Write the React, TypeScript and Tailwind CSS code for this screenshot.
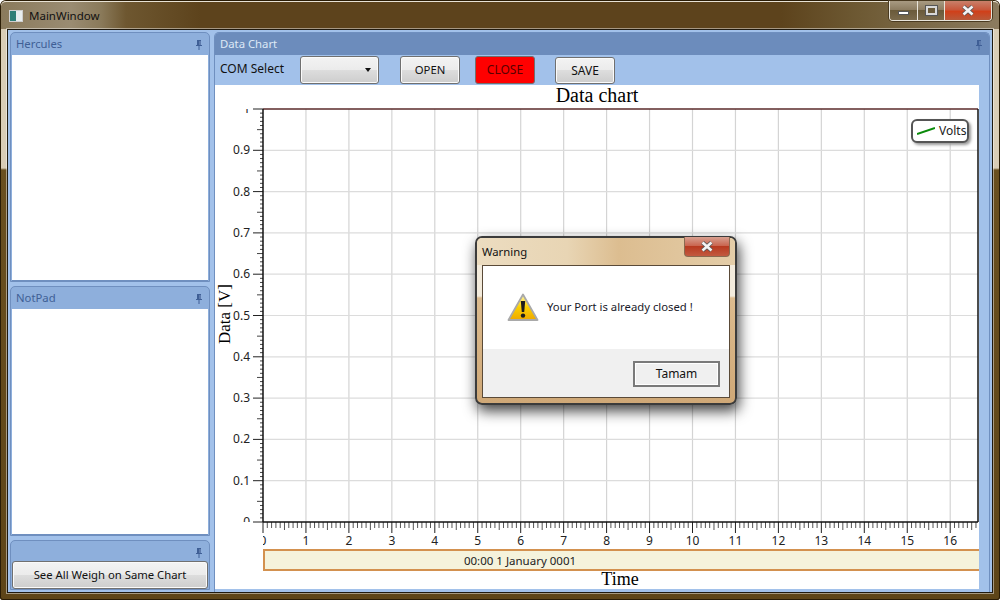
import React from 'react';

const ui = { fontFamily: '"Noto Sans", "Open Sans", sans-serif' };
const serif = '"Liberation Serif", serif';
const sans = '"Noto Sans", "Open Sans", sans-serif';

const btn =
  'flex items-center justify-center rounded-[3px] border border-[#707070] bg-[linear-gradient(#f3f3f3_0%,#ebebeb_50%,#dddddd_50%,#cdcdcd_100%)] text-[#111] shadow-[inset_0_0_0_1px_#fafafa]';

const capGlass = 'bg-[linear-gradient(#a89a82_0%,#8a7a5e_50%,#6a5a3a_50%,#7a6a4c_100%)]';

function Pin() {
  return (
    <svg width="8" height="10" viewBox="0 0 8 10" className="shrink-0">
      <path d="M2 0h4v5h1v1H4.5v4h-1V6H1V5h1z" fill="#3f5f96" />
      <path d="M4.5 1h1v4h-1z" fill="#7f9ac6" />
    </svg>
  );
}

function DockPanel({ title, className, children }: { title: string; className: string; children?: React.ReactNode }) {
  return (
    <div className={`flex flex-col rounded-t-[5px] border border-[#6f8fbf] bg-[#8eafdc] ${className}`}>
      <div className="flex h-[22px] shrink-0 items-center justify-between pl-[5px] pr-[6px] pt-[1px] text-[11.3px] text-[#3f5f96]">
        <span>{title}</span>
        <Pin />
      </div>
      {children}
    </div>
  );
}

function Chart() {
  const xs = Array.from({ length: 17 }, (_, i) => 48 + i * 42.95);
  const ys = Array.from({ length: 11 }, (_, i) => 24 + i * 41.3);
  const xMinor = Array.from({ length: 167 }, (_, i) => 48 + i * 4.295);
  const yMinor = Array.from({ length: 101 }, (_, i) => 24 + i * 4.13);
  return (
    <svg width="764" height="504" viewBox="0 0 764 504" className="block">
      <defs>
        <clipPath id="ylab">
          <rect x="0" y="24" width="47" height="413" />
        </clipPath>
        <clipPath id="xlab">
          <rect x="48" y="440" width="716" height="24" />
        </clipPath>
      </defs>
      <text x="382" y="17" textAnchor="middle" fontFamily={serif} fontSize="20" fill="#000">
        Data chart
      </text>
      {xs.slice(1).map((x) => (
        <line key={x} x1={x} x2={x} y1="24" y2="437" stroke="#d4d4d4" strokeWidth="1.2" />
      ))}
      {ys.slice(1, 10).map((y) => (
        <line key={y} x1="48" x2="763" y1={y} y2={y} stroke="#dcdcdc" strokeWidth="1.2" />
      ))}
      {yMinor.map((y, i) => (
        <line key={y} x1={i % 10 === 0 ? 38 : i % 5 === 0 ? 42 : 45} x2="48" y1={y} y2={y} stroke={i % 10 === 0 ? '#222' : '#444'} strokeWidth="1" />
      ))}
      {xMinor.map((x, i) => (
        <line key={x} x1={x} x2={x} y1="437" y2={i % 10 === 0 ? 448 : i % 5 === 0 ? 445 : 443} stroke={i % 10 === 0 ? '#222' : '#555'} strokeWidth="1" />
      ))}
      <line x1="48" x2="763" y1="24" y2="24" stroke="#5a2a2a" strokeWidth="1.5" />
      <line x1="48" x2="48" y1="24" y2="437" stroke="#111" strokeWidth="1.5" />
      <line x1="763" x2="763" y1="24" y2="437" stroke="#111" strokeWidth="1.5" />
      <line x1="48" x2="763" y1="437" y2="437" stroke="#111" strokeWidth="1.5" />
      <g clipPath="url(#ylab)" fontFamily={sans} fontSize="12" fill="#222">
        {ys.map((y, i) => (
          <text key={y} x="35" y={y + 4} textAnchor="end">
            {i === 0 ? '1' : i === 10 ? '0' : (1 - i / 10).toFixed(1)}
          </text>
        ))}
      </g>
      <g clipPath="url(#xlab)" fontFamily={sans} fontSize="12" fill="#222">
        {xs.map((x, i) => (
          <text key={x} x={x} y="460" textAnchor="middle">
            {i}
          </text>
        ))}
      </g>
      <rect x="49" y="465" width="716" height="20" fill="#f5f3dc" stroke="#d3914f" strokeWidth="2" />
      <text x="305" y="480" textAnchor="middle" fontFamily={sans} fontSize="11.5" fill="#222">
        00:00 1 January 0001
      </text>
      <text x="405" y="500" textAnchor="middle" fontFamily={serif} fontSize="18" fill="#000">
        Time
      </text>
      <text transform="translate(15 229) rotate(-90)" x="0" y="0" textAnchor="middle" fontFamily={serif} fontSize="17" fill="#000">
        Data [V]
      </text>
    </svg>
  );
}

function Warning() {
  return (
    <svg width="32" height="29" viewBox="0 0 32 29" className="shrink-0">
      <defs>
        <linearGradient id="warn" x1="0" y1="0" x2="0" y2="1">
          <stop offset="0" stopColor="#fff6b0" />
          <stop offset="0.5" stopColor="#fbd000" />
          <stop offset="1" stopColor="#eea800" />
        </linearGradient>
      </defs>
      <path d="M16 1.5 L30.5 27 H1.5 Z" fill="url(#warn)" stroke="#a9a9a9" strokeWidth="1.8" strokeLinejoin="round" />
      <path d="M13.8 8h4.4l-1 11h-2.4z" fill="#1c1c1c" />
      <circle cx="16" cy="22.6" r="2.2" fill="#1c1c1c" />
    </svg>
  );
}

function CloseGlyph() {
  return (
    <svg width="14" height="11" viewBox="0 0 14 11">
      <path d="M2.5 1.5 L11.5 9.5 M11.5 1.5 L2.5 9.5" stroke="#555" strokeWidth="4.2" />
      <path d="M2.5 1.5 L11.5 9.5 M11.5 1.5 L2.5 9.5" stroke="#f4f4f4" strokeWidth="2.6" />
    </svg>
  );
}

export default function App() {
  return (
    <div
      className="relative flex h-[600px] w-[1000px] flex-col overflow-hidden rounded-t-[6px] rounded-b-[3px] bg-[linear-gradient(#d8ccb6_0px,#d8ccb6_168px,#6a5020_170px,#5e4518_100%)] text-[12px] shadow-[inset_0_0_0_1px_#2a1c05]"
      style={ui}
    >
      {/* title bar */}
      <div className="mx-[1px] mt-[1px] flex h-[28px] shrink-0 items-start rounded-t-[5px] border-t border-[#e8e2d4] bg-[linear-gradient(90deg,#8a7a5c_0px,#9a8c72_70px,#8a7a5a_100px,#6e5730_125px,#5d431c_200px,#5d431c_780px,#6e5a34_860px,#8c7c60_1000px)]">
        <div className="ml-[8px] mt-[8px] h-[12px] w-[14px] border border-[#cfcfcf] bg-[linear-gradient(90deg,#2f7f78_0%,#2f7f78_50%,#e8eef0_50%)]" />
        <span className="ml-[6px] mt-[5px] text-[11.5px] text-[#111]">MainWindow</span>
        <div className="ml-auto mr-[7px] flex h-[20px] -mt-[1px] overflow-hidden rounded-b-[4px] border border-t-0 border-[#e8e4da] shadow-[0_0_0_1px_#4a3a20]">
          <div className={`flex w-[28px] items-center justify-center border-r border-[#e8e4da] ${capGlass}`}>
            <div className="mt-[4px] h-[4px] w-[11px] border border-[#555] bg-white" />
          </div>
          <div className={`flex w-[27px] items-center justify-center border-r border-[#e8e4da] ${capGlass}`}>
            <div className="h-[9px] w-[11px] border-2 border-[#d8d8d8] bg-[#6a5a3a] outline outline-[#555]" />
          </div>
          <div className="flex w-[46px] items-center justify-center bg-[linear-gradient(#c9806a_0%,#c8583c_45%,#d0401a_55%,#b85a3a_100%)]">
            <CloseGlyph />
          </div>
        </div>
      </div>

      {/* client area */}
      <div className="mx-[7px] flex h-[564px] gap-[4px] border border-[#1f1a10] bg-[#a2c1ea] px-[2px] pt-[2px] shadow-[0_0_0_1px_rgba(255,255,255,0.45)]">
        <div className="flex w-[200px] shrink-0 flex-col gap-[4px]">
          <DockPanel title="Hercules" className="h-[250px]">
            <div className="mx-[1px] flex-1 border-b border-[#6f8fbf] bg-white" />
          </DockPanel>
          <DockPanel title="NotPad" className="h-[250px]">
            <div className="mx-[1px] flex-1 border-b border-[#6f8fbf] bg-white" />
          </DockPanel>
          <DockPanel title="" className="h-[50px]">
            <button className={`${btn} mx-[1px] -mt-[2px] h-[28px] text-[11.3px]`}>See All Weigh on Same Chart</button>
          </DockPanel>
        </div>

        <div className="flex min-w-0 flex-1 flex-col rounded-t-[5px] border-l border-t border-r border-[#6f8fbf]">
          <div className="flex h-[22px] shrink-0 items-center justify-between rounded-t-[4px] bg-[#6c8cbc] pl-[5px] pr-[6px] pt-[1px] text-[11.3px] text-[#dde8f6]">
            <span>Data Chart</span>
            <Pin />
          </div>
          <div className="flex h-[30px] shrink-0 items-center pl-[5px] text-[#111]">
            <span className="w-[80px] -translate-y-[1px]">COM Select</span>
            <div className={`${btn} h-[28px] w-[79px] justify-end pr-[7px]`}>
              <span className="h-0 w-0 border-x-[3.5px] border-t-[4px] border-x-transparent border-t-[#111]" />
            </div>
            <button className={`${btn} ml-[21px] h-[28px] w-[60px] text-[11.3px]`}>OPEN</button>
            <button className="ml-[15px] flex h-[28px] w-[60px] items-center justify-center rounded-[3px] border border-[#707070] bg-[#ff0000] text-[12px] text-[#5a0000]">
              CLOSE
            </button>
            <button className={`${btn} ml-[20px] mt-[1px] h-[27px] w-[60px] text-[12px]`}>SAVE</button>
          </div>
          <div className="relative mr-[10px] h-[504px] bg-white">
            <Chart />
            {/* legend */}
            <div className="absolute left-[696px] top-[34px] flex h-[24px] w-[58px] items-center gap-[4px] rounded-[6px] border-2 border-[#555] bg-white pl-[4px] text-[12px] text-[#222] shadow-[2px_2px_3px_#999]">
              <svg width="18" height="8" viewBox="0 0 18 8">
                <line x1="0" y1="7" x2="18" y2="1" stroke="#0a8a0a" strokeWidth="2" />
              </svg>
              <span>Volts</span>
            </div>
          </div>
        </div>
      </div>

      {/* warning dialog */}
      <div className="absolute left-[475px] top-[236px] flex h-[169px] w-[262px] flex-col rounded-[7px] border-2 border-[#3b3b3b] bg-[linear-gradient(#e6d2ae_0px,#f3ebdc_28px,#f3ebdc_58px,#dcbb8e_60px,#cfa877_100%)] shadow-[2px_6px_14px_rgba(0,0,0,0.75)]">
        <div className="relative flex h-[27px] shrink-0 items-center rounded-t-[5px] bg-[linear-gradient(90deg,#ecdcc0_0%,#e8d5b4_35%,#dcbd90_55%,#e4cda8_100%)] pl-[5px] text-[11.3px] text-[#111]">
          <span className="mt-[1px]">Warning</span>
          <div className="absolute right-[5px] top-[-1px] flex h-[20px] w-[46px] items-center justify-center rounded-b-[4px] border border-t-0 border-[#8a6a50] bg-[linear-gradient(#d8a090_0%,#c8604a_50%,#b83a20_50%,#c25a40_100%)]">
            <CloseGlyph />
          </div>
        </div>
        <div className="mx-[5px] flex h-[133px] flex-col border border-[#5a4a38] bg-white">
          <div className="flex h-[83px] items-center pl-[24px] text-[11.3px] text-[#1a1a2a]">
            <Warning />
            <span className="ml-[8px]">Your Port is already closed !</span>
          </div>
          <div className="flex flex-1 items-start justify-end bg-[#f0f0f0] pr-[9px] pt-[12px]">
            <button className="flex h-[26px] w-[87px] items-center justify-center border-2 border-[#7a7a7a] bg-[#f0f0f0] text-[12px] text-[#111] shadow-[inset_0_0_0_1px_#fff]">
              Tamam
            </button>
          </div>
        </div>
      </div>
    </div>
  );
}
